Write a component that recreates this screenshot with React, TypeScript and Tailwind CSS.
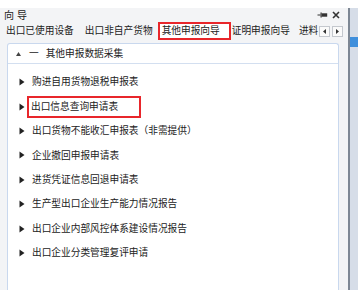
import React from "react";

const font = { fontFamily: '"Noto Sans CJK SC", "Noto Sans", sans-serif' };

function Arrow() {
  return (
    <svg width="6" height="8" viewBox="0 0 6 8" className="shrink-0">
      <path d="M0.5 0.5 L5.5 4 L0.5 7.5 Z" fill="#222" />
    </svg>
  );
}

const items = [
  "购进自用货物退税申报表",
  "出口信息查询申请表",
  "出口货物不能收汇申报表（非需提供）",
  "企业撤回申报申请表",
  "进货凭证信息回退申请表",
  "生产型出口企业生产能力情况报告",
  "出口企业内部风控体系建设情况报告",
  "出口企业分类管理复评申请",
];

export default function App() {
  return (
    <div
      className="w-[358px] h-[290px] bg-white flex overflow-hidden text-[#222]"
      style={font}
    >
      <div className="w-[348px] h-full flex flex-col">
        <div className="h-[8px] bg-white" />
        <div className="flex-1 bg-[#f3f4f6] flex flex-col">
          {/* title row */}
          <div className="h-[14px] flex items-center pl-[4px] pr-[8px] text-[10px] leading-none">
            <span className="tracking-[3px]">向导</span>
            <div className="ml-auto flex items-center gap-[4px]">
              <svg width="11" height="6" viewBox="0 0 11 6">
                <rect x="0.5" y="2.5" width="3" height="1" fill="#333" />
                <rect x="3.5" y="0.5" width="1.2" height="5" fill="#333" />
                <rect x="4.7" y="1.3" width="5.5" height="3.4" fill="#333" />
              </svg>
              <svg width="8" height="8" viewBox="0 0 8 8">
                <path d="M1 1 L7 7 M7 1 L1 7" stroke="#333" strokeWidth="1.6" />
              </svg>
            </div>
          </div>
          {/* tabs row */}
          <div className="h-[18px] flex items-center text-[9.7px] leading-none whitespace-nowrap relative">
            <span className="ml-[6px]">出口已使用设备</span>
            <span className="ml-[11px]">出口非自产货物</span>
            <span className="ml-[5px] h-[18px] flex items-center bg-white border-[2.5px] border-[#e8262b] pl-[2px] pr-[9px]">
              其他申报向导
            </span>
            <span className="ml-[1px]">证明申报向导</span>
            <span className="ml-[9px]">进料</span>
            <div className="ml-[1px] flex gap-[2px]">
              <div className="w-[11px] h-[11px] border border-[#c4c8ce] bg-[#fafafa] flex items-center justify-center">
                <svg width="3" height="5" viewBox="0 0 3 5">
                  <path d="M3 0 L0 2.5 L3 5 Z" fill="#333" />
                </svg>
              </div>
              <div className="w-[11px] h-[11px] border border-[#c4c8ce] bg-[#fafafa] flex items-center justify-center">
                <svg width="3" height="5" viewBox="0 0 3 5">
                  <path d="M0 0 L3 2.5 L0 5 Z" fill="#333" />
                </svg>
              </div>
            </div>
          </div>
          {/* content panel */}
          <div className="mt-[3px] ml-[7px] w-[332px] flex-1 bg-white border border-[#c9d8ee] border-b-0 rounded-t-[3px] flex flex-col">
            <div className="h-[20px] border-b border-[#d3dff0] flex items-center text-[9.7px] leading-none">
              <svg width="5" height="4" viewBox="0 0 5 4" className="ml-[8px]">
                <path d="M0 4 L2.5 0 L5 4 Z" fill="#444" />
              </svg>
              <span className="ml-[8px]">一</span>
              <span className="ml-[7px]">其他申报数据采集</span>
            </div>
            <div className="pt-[6px] flex flex-col">
              {items.map((t, i) => (
                <div
                  key={i}
                  className="h-[24.4px] flex items-center pl-[11px] text-[9.7px] leading-none whitespace-nowrap"
                >
                  <Arrow />
                  {i === 1 ? (
                    <span className="ml-[2px] h-[22px] flex items-center border-[2.5px] border-[#e8262b] pl-[2px] pr-[21px]">
                      {t}
                    </span>
                  ) : (
                    <span className="ml-[7px]">{t}</span>
                  )}
                </div>
              ))}
            </div>
          </div>
        </div>
      </div>
      <div className="w-[10px] h-full flex flex-col">
        <div className="h-[8px] bg-white" />
        <div className="flex-1 flex">
          <div className="w-[2px] bg-[#7d8794]" />
          <div className="flex-1 bg-[#d6dde8] flex flex-col">
            <div className="h-[29px]" />
            <div className="h-[10px] bg-[#3f8fdc]" />
          </div>
        </div>
      </div>
    </div>
  );
}
